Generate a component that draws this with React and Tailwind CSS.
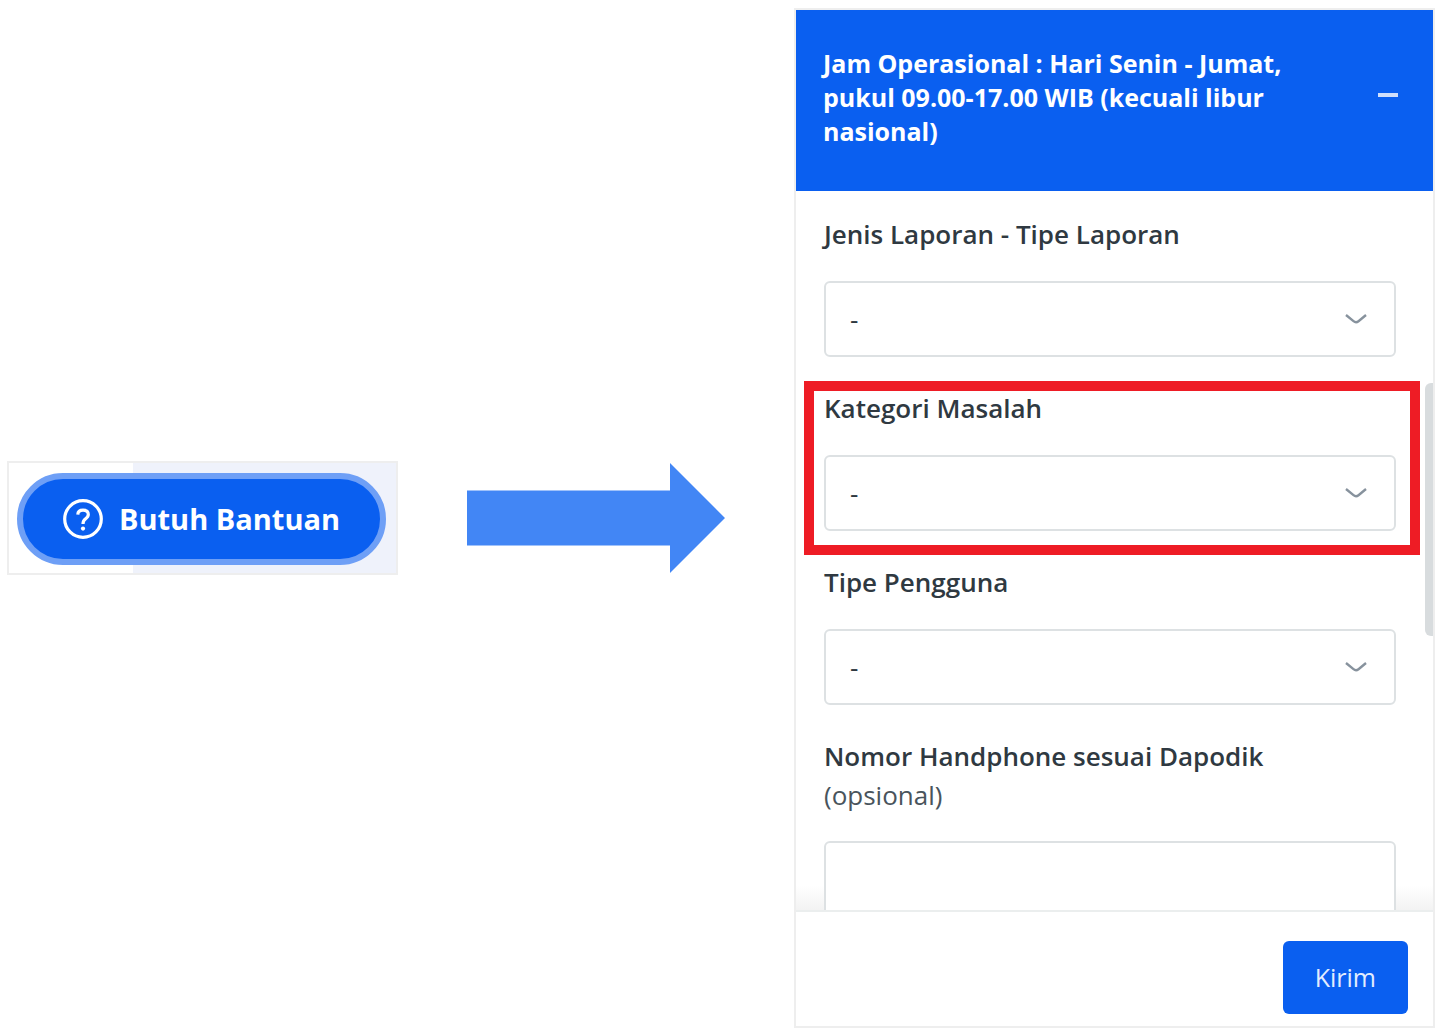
import React from "react";

function Chevron() {
  return (
    <svg
      className="pointer-events-none absolute top-8 right-7 h-3 w-6"
      viewBox="0 0 24 12"
      fill="none"
      stroke="#87929d"
      strokeWidth="2.4"
      aria-hidden="true"
    >
      <path d="M2 2 L9.5 8.2 Q12 10.2 14.5 8.2 L22 2" />
    </svg>
  );
}

function SelectField({ id, label, highlighted }) {
  return (
    <div className="relative">
      {highlighted && (
        <div className="pointer-events-none absolute -top-2 -right-6 -bottom-6 -left-5 border-[10px] border-[#ee1c25]" />
      )}
      <label htmlFor={id} className="block text-[26px] leading-[39px] font-semibold">
        {label}
      </label>
      <div className="relative mt-[27px]">
        <select
          id={id}
          className="block h-[76px] w-full appearance-none rounded-md border-2 border-[#dde1e3] bg-white px-6 text-[26px]"
        >
          <option>-</option>
        </select>
        <Chevron />
      </div>
    </div>
  );
}

function HelpCard() {
  return (
    <div className="border-2 border-[#eeeeee] bg-[linear-gradient(to_right,#ffffff_32%,#eff2fb_32%)] pt-[10px] pr-[10px] pb-2 pl-2">
      <button
        type="button"
        className="flex h-[92px] w-full items-center justify-center gap-4 rounded-full border-[6px] border-[#6e9ff6] bg-[#0a5ff0] text-[29px] font-bold whitespace-nowrap text-white"
      >
        <svg className="h-10 w-10 shrink-0" viewBox="0 0 40 40" fill="none" stroke="currentColor" aria-hidden="true">
          <circle cx="20" cy="20" r="18.3" strokeWidth="3.2" />
          <path d="M14.8 15.6 Q15 11.2 20 11.2 Q25.3 11.2 25.3 15.6 Q25.3 18 22.5 19.8 Q20 21.4 20 25" strokeWidth="3.2" />
          <circle cx="20" cy="29.6" r="2.1" fill="currentColor" stroke="none" />
        </svg>
        Butuh Bantuan
      </button>
    </div>
  );
}

function ReportPanel() {
  return (
    <section className="flex h-full min-h-0 flex-col border-2 border-[#eeeeee] bg-white text-[#2f3941]">
      <header className="flex justify-between bg-[#0a5ff0] pt-9 pr-[35px] pb-[43px] pl-[27px] text-white">
        <h1 className="max-w-[480px] text-[25px] leading-[34px] font-bold">
          Jam Operasional : Hari Senin - Jumat, pukul 09.00-17.00 WIB (kecuali libur nasional)
        </h1>
        <button type="button" aria-label="Minimize" className="flex h-[98px] items-center">
          <span className="h-1 w-5 bg-[#cfdffc]" />
        </button>
      </header>

      <div className="relative min-h-0 flex-1 overflow-hidden">
        <form id="report" className="flex flex-col gap-8 pt-6 pr-[37px] pl-7">
          <SelectField id="jenis" label="Jenis Laporan - Tipe Laporan" />
          <SelectField id="kategori" label="Kategori Masalah" highlighted />
          <SelectField id="tipe" label="Tipe Pengguna" />
          <div>
            <label htmlFor="nomor" className="block text-[26px] leading-[39px]">
              <span className="block font-semibold">Nomor Handphone sesuai Dapodik</span>
              <span className="block text-[#49545c]">(opsional)</span>
            </label>
            <input
              id="nomor"
              type="tel"
              className="relative z-10 mt-[26px] block h-[76px] w-full rounded-md border-2 border-[#dde1e3] bg-white px-6 text-[26px]"
            />
          </div>
        </form>
        <div className="absolute inset-x-0 bottom-0 h-6 bg-linear-to-t from-[#f3f3f3] to-white/0" />
        <div className="absolute top-48 right-0 h-[253px] w-2 rounded-l-md bg-[#d8dcde]" />
      </div>

      <footer className="flex justify-end border-t-2 border-[#ebeeee] pt-[29px] pr-[25px] pb-3">
        <button
          type="submit"
          form="report"
          className="h-[73px] rounded-md bg-[#0a5ff0] px-8 text-[25px] text-[#e3edfe]"
        >
          Kirim
        </button>
      </footer>
    </section>
  );
}

export default function App() {
  return (
    <main className="grid h-screen grid-cols-[391fr_258fr_641fr] grid-rows-[minmax(0,1fr)] items-center gap-x-[69px] bg-white pt-2 pr-1 pb-1 pl-[7px] font-['Open_Sans',sans-serif]">
      <HelpCard />
      <svg className="block w-full" viewBox="0 0 258 110" fill="#4286f5" aria-hidden="true">
        <path d="M0 27.5 H203 V0 L258 55 L203 110 V82.5 H0 Z" />
      </svg>
      <ReportPanel />
    </main>
  );
}
